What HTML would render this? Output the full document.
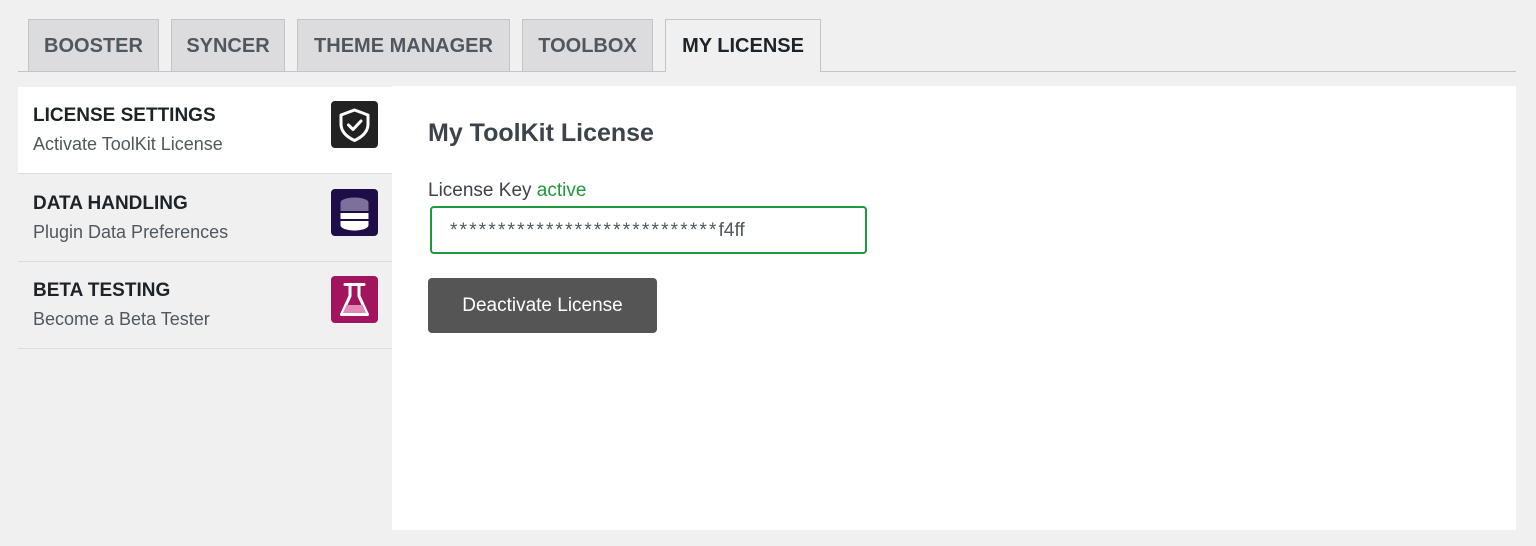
<!DOCTYPE html>
<html><head><meta charset="utf-8"><style>
*{margin:0;padding:0;box-sizing:border-box}
body{width:1536px;height:546px;background:#f0f0f1;font-family:"Liberation Sans",sans-serif;position:relative;overflow:hidden}
.a{position:absolute}
.tab{position:absolute;top:19px;height:52px;background:#dcdcde;border:1px solid #c3c4c7;border-bottom:none;color:#50575e;font-weight:bold;font-size:20px;line-height:52px;text-align:center}
.tab.on{background:#f0f0f1;color:#1d2327;height:53px}
.line{position:absolute;left:18px;top:71px;width:1498px;height:1px;background:#c3c4c7}
.item{position:absolute;left:18px;width:374px;height:87px;border-bottom:1px solid #dcdcde}
.item .t{position:absolute;left:15px;top:18px;font-size:19px;font-weight:bold;color:#1d2327}
.item .s{position:absolute;left:15px;top:47px;font-size:18px;color:#50575e}
.ic{position:absolute;left:313px;top:14px;width:47px;height:47px;border-radius:4px}
.ic svg{display:block}
</style></head><body>
<div class="tab" style="left:28px;width:131px">BOOSTER</div>
<div class="tab" style="left:171px;width:114px">SYNCER</div>
<div class="tab" style="left:297px;width:213px">THEME MANAGER</div>
<div class="tab" style="left:522px;width:131px">TOOLBOX</div>
<div class="line"></div>
<div class="tab on" style="left:665px;width:156px">MY LICENSE</div>

<div class="item" style="top:87px;background:#fff">
 <div class="t">LICENSE SETTINGS</div><div class="s">Activate ToolKit License</div>
 <div class="ic" style="background:#222;">
  <svg width="47" height="47" viewBox="0 0 47 47"><path d="M23.5 9 L37 14 V23 C37 30.5 31 36 23.5 39.5 C16 36 10 30.5 10 23 V14 Z" fill="none" stroke="#fff" stroke-width="3" stroke-linejoin="round"/><path d="M17.5 24 L22 28.5 L30 20" fill="none" stroke="#fff" stroke-width="3" stroke-linecap="round" stroke-linejoin="round"/></svg>
 </div>
</div>
<div class="item" style="top:175px">
 <div class="t">DATA HANDLING</div><div class="s">Plugin Data Preferences</div>
 <div class="ic" style="background:#1f0d47;">
  <svg width="47" height="47" viewBox="0 0 47 47"><ellipse cx="23.5" cy="13.5" rx="14" ry="5" fill="#7d719c"/><rect x="9.5" y="13.5" width="28" height="8.5" fill="#7d719c"/><path d="M9.5 24 H37.5 V30 H9.5Z" fill="#fff"/><path d="M9.5 32 H37.5 V36 C37.5 39.5 30.5 41.5 23.5 41.5 C16.5 41.5 9.5 39.5 9.5 36Z" fill="#fff"/></svg>
 </div>
</div>
<div class="item" style="top:262px">
 <div class="t">BETA TESTING</div><div class="s">Become a Beta Tester</div>
 <div class="ic" style="background:#a3145f;">
  <svg width="47" height="47" viewBox="0 0 47 47"><path d="M14 8.5 H33" stroke="#fff" stroke-width="3" stroke-linecap="round"/><path d="M19 9.5 V20 L10.5 38.5 H36.5 L28 20 V9.5" fill="none" stroke="#fff" stroke-width="3" stroke-linejoin="round"/><path d="M15.5 29 H31.5 L35 37 H12Z" fill="#e08ab8"/></svg>
 </div>
</div>

<div class="a" style="left:392px;top:86px;width:1124px;height:444px;background:#fff"></div>
<div class="a" style="left:428px;top:119px;font-size:25px;font-weight:bold;color:#3c434a">My ToolKit License</div>
<div class="a" style="left:428px;top:180px;font-size:19px;color:#3c434a">License Key <span style="color:#1e9a3c">active</span></div>
<div class="a" style="left:430px;top:206px;width:437px;height:48px;border:2.5px solid #1e9a3c;border-radius:4px;background:#fff"></div>
<div class="a" style="left:450px;top:220px;font-size:19px;color:#50575e;letter-spacing:2.2px">****************************<span style="letter-spacing:0">f4ff</span></div>
<div class="a" style="left:428px;top:278px;width:229px;height:55px;background:#555;border-radius:4px;color:#fff;font-size:19px;line-height:56px;text-align:center">Deactivate License</div>
</body></html>
